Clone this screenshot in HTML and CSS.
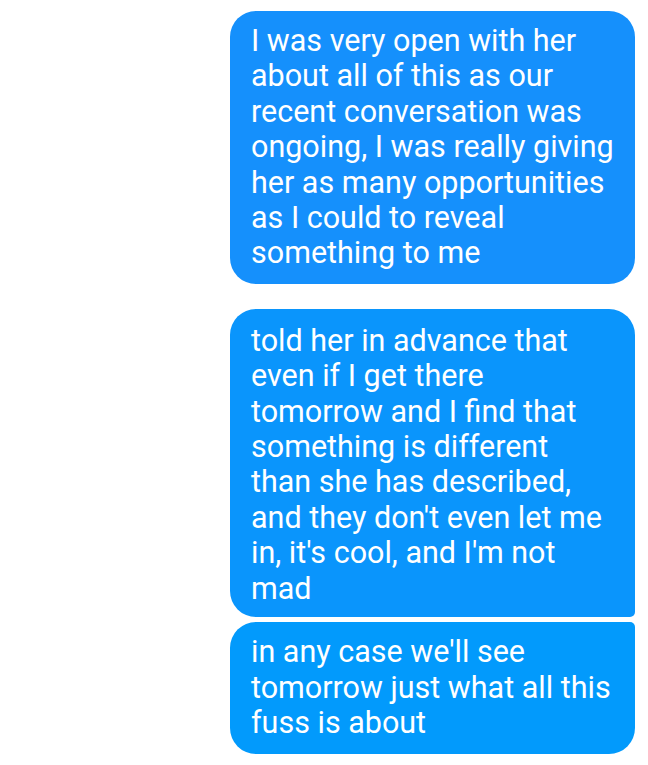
FILE: index.html
```html
<!DOCTYPE html>
<html>
<head>
<meta charset="utf-8">
<link rel="stylesheet" href="styles.css">
</head>
<body>
<div class="thread">
  <div class="bubble first solo">I was very open with her about all of this as our recent conversation was ongoing, I was really giving her as many opportunities as I could to reveal something to me</div>
  <div class="group">
    <div class="bubble top second">told her in advance that even if I get there tomorrow and I find that something is different than she has described, and they don't even let me in, it's cool, and I'm not mad</div>
    <div class="bubble bottom third">in any case we'll see tomorrow just what all this fuss is about</div>
  </div>
</div>
</body>
</html>
```
FILE: styles.css
```css
html, body {
  margin: 0;
  padding: 0;
  background: #ffffff;
}
.thread {
  display: flex;
  flex-direction: column;
  align-items: flex-end;
  padding: 11px 13px 0 0;
  gap: 25px;
}
.group {
  display: flex;
  flex-direction: column;
  gap: 5px;
}
.bubble {
  box-sizing: border-box;
  width: 405px;
  padding: 12px 20.5px 13px 21px;
  font-family: Roboto, "Noto Sans", sans-serif;
  font-size: 30.5px;
  line-height: 35.4px;
  color: #ffffff;
  border-radius: 26px;
}
.second { padding-top: 14px; padding-bottom: 11px; }
.third { padding-bottom: 14px; }
.first { background: #1590fc; }
.second { background: #0a95fc; }
.third { background: #029afc; }
.top { border-bottom-right-radius: 5px; }
.bottom { border-top-right-radius: 5px; }
```
